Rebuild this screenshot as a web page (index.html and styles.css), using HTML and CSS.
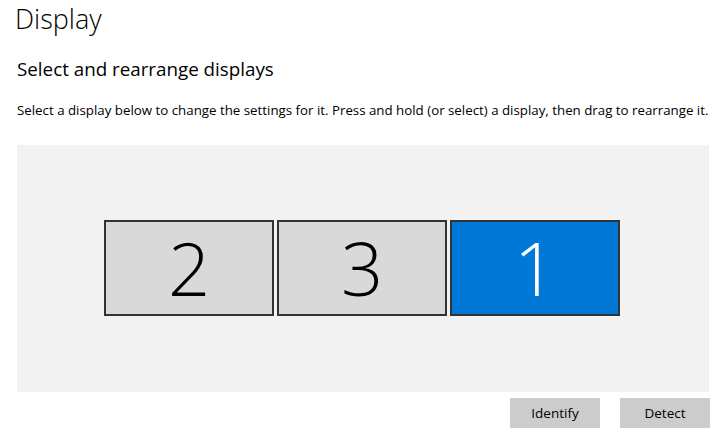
FILE: index.html
```html
<!DOCTYPE html>
<html>
<head>
<meta charset="utf-8">
<link rel="stylesheet" href="styles.css">
</head>
<body>
<div class="page">
  <h1 class="title">Display</h1>
  <h2 class="subtitle">Select and rearrange displays</h2>
  <p class="desc">Select a display below to change the settings for it. Press and hold (or select) a display, then drag to rearrange it.</p>
  <div class="canvas">
    <div class="monitors">
      <div class="monitor">2</div>
      <div class="monitor">3</div>
      <div class="monitor selected">1</div>
    </div>
  </div>
  <div class="actions">
    <button class="btn">Identify</button>
    <button class="btn">Detect</button>
  </div>
</div>
</body>
</html>
```
FILE: styles.css
```css
html, body {
  margin: 0;
  padding: 0;
  background: #ffffff;
}
body {
  font-family: "Open Sans", "Noto Sans", sans-serif;
  color: #000;
}
.page {
  width: 722px;
  height: 433px;
  overflow: hidden;
  padding: 0 0 0 17px;
  box-sizing: border-box;
}
.title {
  margin: 0;
  padding-top: 1px;
  margin-left: -2px;
  font-weight: 300;
  font-size: 27px;
  line-height: 36px;
}
.subtitle {
  margin: 20px 0 0;
  font-weight: 400;
  font-size: 18.8px;
  line-height: 24px;
}
.desc {
  margin: 20px 0 0;
  font-size: 13.3px;
  line-height: 18px;
  white-space: nowrap;
}
.canvas {
  margin-top: 26px;
  width: 692px;
  height: 247px;
  background: #f2f2f2;
  display: flex;
  padding: 75px 0 0 87px;
  box-sizing: border-box;
}
.monitors {
  display: flex;
  gap: 3px;
  height: 96px;
}
.monitor {
  width: 170px;
  height: 96px;
  box-sizing: border-box;
  border: 2px solid #333333;
  background: #d9d9d9;
  display: flex;
  align-items: center;
  justify-content: center;
  font-weight: 300;
  font-size: 74px;
  color: #000;
  line-height: 1;
}
.monitor.selected {
  background: #0078d7;
  color: #ffffff;
}
.actions {
  display: flex;
  justify-content: flex-end;
  gap: 20px;
  margin-top: 6px;
  width: 693px;
}
.btn {
  width: 90px;
  height: 30px;
  border: none;
  background: #cccccc;
  font-family: "Open Sans", "Noto Sans", sans-serif;
  font-size: 13.5px;
  color: #000;
  padding: 0;
}
```
